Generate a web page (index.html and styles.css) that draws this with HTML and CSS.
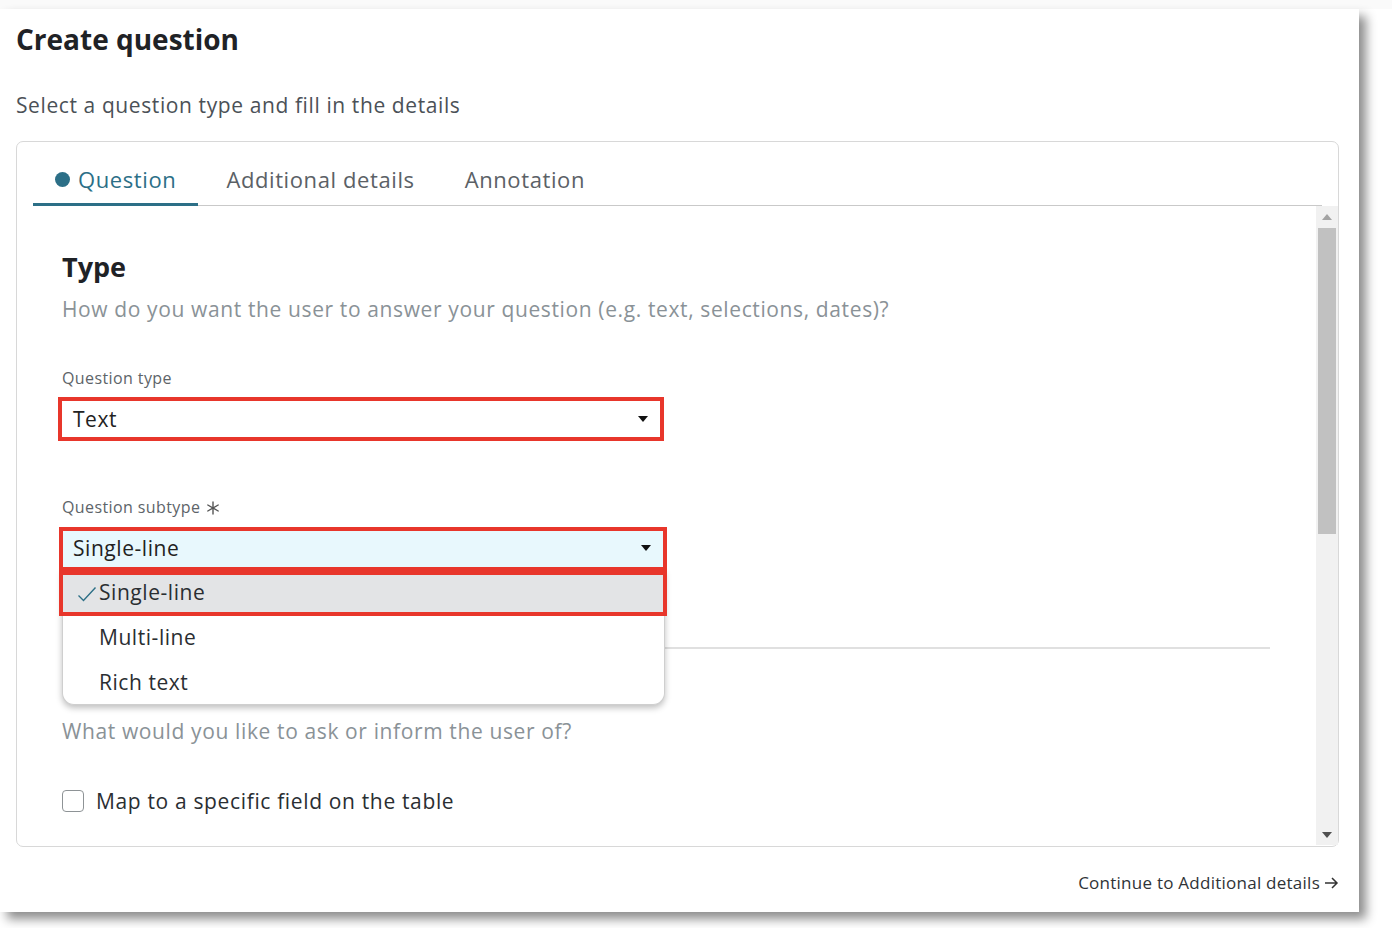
FILE: index.html
```html
<!DOCTYPE html>
<html lang="en">
<head>
<meta charset="utf-8">
<title>Create question</title>
<link rel="stylesheet" href="styles.css">
</head>
<body>
<div class="topstrip"></div>
<div class="panel">
  <h1 class="title">Create question</h1>
  <p class="subtitle">Select a question type and fill in the details</p>

  <div class="card">
    <div class="tabs">
      <div class="tab active"><span class="dot"></span>Question</div>
      <div class="tab">Additional details</div>
      <div class="tab">Annotation</div>
    </div>
    <div class="scrollarea">
      <div class="content">
        <h2 class="section-title">Type</h2>
        <p class="section-desc">How do you want the user to answer your question (e.g. text, selections, dates)?</p>

        <div class="field first">
          <div class="label">Question type</div>
          <div class="select hl">
            <span>Text</span>
            <svg class="caret" width="10" height="6" viewBox="0 0 10 6"><path d="M0 0h10L5 6z" fill="#111"/></svg>
          </div>
        </div>

        <div class="field second">
          <div class="label">Question subtype
            <svg class="req" width="14" height="14" viewBox="0 0 14 14"><g stroke="#555" stroke-width="1.4" stroke-linecap="round"><path d="M7 1v12"/><path d="M1.8 4l10.4 6"/><path d="M1.8 10l10.4-6"/></g></svg>
          </div>
          <div class="subwrap">
            <div class="select open hl">
              <span>Single-line</span>
              <svg class="caret" width="10" height="6" viewBox="0 0 10 6"><path d="M0 0h10L5 6z" fill="#111"/></svg>
            </div>
            <div class="menu">
              <div class="opt selected hl">
                <svg class="check" width="20" height="16" viewBox="0 0 20 16"><path d="M1.5 9.5l5 5L18.5 1.5" fill="none" stroke="#2d6f86" stroke-width="1.4"/></svg>
                Single-line
              </div>
              <div class="opt">Multi-line</div>
              <div class="opt">Rich text</div>
            </div>
          </div>
        </div>

        <hr class="divider">

        <p class="section-desc ask">What would you like to ask or inform the user of?</p>

        <label class="check-row">
          <span class="box"></span>
          <span>Map to a specific field on the table</span>
        </label>
      </div>
      <div class="scrollbar">
        <div class="arrow up"></div>
        <div class="thumb"></div>
        <div class="track-rest"></div>
        <div class="arrow down"></div>
      </div>
    </div>
  </div>

  <div class="footer">
    <a class="continue">Continue to Additional details
      <svg width="15" height="12" viewBox="0 0 15 12"><path d="M1 6h12M8 1l5 5-5 5" fill="none" stroke="#333" stroke-width="1.5"/></svg>
    </a>
  </div>
</div>
</body>
</html>
```

FILE: styles.css
```css
* { box-sizing: border-box; }
html, body { margin: 0; padding: 0; }
body {
  background: #ffffff;
  font-family: "Open Sans", "Noto Sans", sans-serif;
  color: #2b2f33;
  width: 1392px;
  height: 928px;
  overflow: hidden;
}
.topstrip { height: 9px; background: #fafafa; }
.panel {
  width: 1359px;
  height: 903px;
  background: #fff;
  box-shadow: 7px 7px 10px rgba(0,0,0,0.45);
  padding: 11px 20px 0 16px;
  display: flex;
  flex-direction: column;
}
.title {
  margin: 0;
  font-size: 28px;
  line-height: 38px;
  font-weight: 700;
  color: #1f2226;
}
.subtitle {
  margin: 32px 0 0 0;
  font-size: 21px;
  line-height: 30px;
  letter-spacing: 0.6px;
  color: #4b5157;
}
.card {
  margin-top: 21px;
  border: 1px solid #d8d8d8;
  border-radius: 7px;
  height: 706px;
  display: flex;
  flex-direction: column;
}
.tabs {
  margin: 0 16px;
  padding-top: 22px;
  display: flex;
  gap: 6px;
  border-bottom: 1px solid #c9c9c9;
}
.tab {
  padding: 0 22px 9px 22px;
  font-size: 22px;
  line-height: 30px;
  letter-spacing: 0.6px;
  color: #5b6166;
  border-bottom: 3px solid transparent;
  margin-bottom: -1px;
  display: flex;
  align-items: center;
}
.tab.active {
  color: #2c6f87;
  border-bottom-color: #2c6f87;
}
.dot {
  width: 15px; height: 15px;
  border-radius: 50%;
  background: #2c6f87;
  margin-right: 8px;
}
.scrollarea {
  flex: 1;
  display: flex;
  min-height: 0;
}
.content {
  flex: 1;
  padding: 44px 0 0 45px;
  overflow: hidden;
}
.section-title {
  margin: 0;
  font-size: 27px;
  line-height: 34px;
  font-weight: 700;
  color: #1f2226;
}
.section-desc {
  margin: 10px 0 0 0;
  font-size: 21px;
  line-height: 30px;
  letter-spacing: 0.62px;
  color: #8a9297;
}
.field.first { margin-top: 43px; }
.field.second { margin-top: 59px; }
.label {
  font-size: 16px;
  line-height: 22px;
  letter-spacing: 0.4px;
  color: #5d6469;
  display: flex;
  align-items: center;
  gap: 6px;
}
.req { margin-top: 1px; }
.select {
  margin-top: 12px;
  height: 36px;
  width: 598px;
  display: flex;
  align-items: center;
  justify-content: space-between;
  padding: 0 12px 0 11px;
  font-size: 21px;
  letter-spacing: 0.55px;
  color: #222;
  background: #fff;
}
.hl { outline: 4px solid #e8362b; }
.subwrap { position: relative; margin-top: 13px; width: 600px; }
.select.open {
  margin-top: 0;
  width: 600px;
  margin-left: 1px;
  background: #e8f8fd;
  padding-left: 10px;
  padding-bottom: 2px;
  position: relative;
  z-index: 3;
}
.menu {
  position: absolute;
  left: 0;
  top: 39px;
  width: 603px;
  height: 135px;
  background: #fff;
  border: 1px solid #cfcfcf;
  border-top: none;
  border-radius: 0 0 12px 12px;
  box-shadow: 0 3px 6px rgba(0,0,0,0.25);
  padding-top: 5px;
  z-index: 2;
}
.opt {
  position: relative;
  height: 45px;
  display: flex;
  align-items: center;
  padding-left: 36px;
  padding-bottom: 2px;
  font-size: 21px;
  letter-spacing: 0.55px;
  color: #2a2e32;
}
.opt.selected {
  height: 37px;
  margin: 0 1px 3px 0;
  background: #e3e4e6;
  padding-bottom: 3px;
}
.check { position: absolute; left: 14px; top: 11px; }
.divider {
  margin: 80px 46px 0 0;
  border: none;
  height: 2px;
  background: #e0e0e0;
}
.section-desc.ask { margin-top: 67px; }
.check-row {
  margin-top: 40px;
  display: flex;
  align-items: center;
  gap: 12px;
  font-size: 21px;
  line-height: 30px;
  letter-spacing: 0.65px;
  color: #2a2e32;
}
.box {
  width: 22px; height: 22px;
  border: 1.5px solid #8e9396;
  border-radius: 4px;
  background: #fff;
}
.scrollbar {
  width: 22px;
  background: #f1f1f1;
  display: flex;
  flex-direction: column;
  align-items: center;
  margin-bottom: 1px;
}
.arrow { width: 22px; height: 22px; position: relative; flex: none; }
.arrow.up::after, .arrow.down::after {
  content: "";
  position: absolute;
  left: 6px;
  border-left: 5px solid transparent;
  border-right: 5px solid transparent;
}
.arrow.up::after { top: 8px; border-bottom: 6px solid #a3a3a3; }
.arrow.down::after { top: 9px; border-top: 6px solid #505050; }
.thumb {
  width: 18px;
  height: 306px;
  background: #c1c1c1;
  flex: none;
}
.track-rest { flex: 1; }
.footer {
  display: flex;
  justify-content: flex-end;
  padding-top: 24px;
}
.continue {
  font-size: 17px;
  font-weight: 500;
  letter-spacing: 0.25px;
  color: #2f3337;
  display: flex;
  align-items: center;
  gap: 4px;
}
```
